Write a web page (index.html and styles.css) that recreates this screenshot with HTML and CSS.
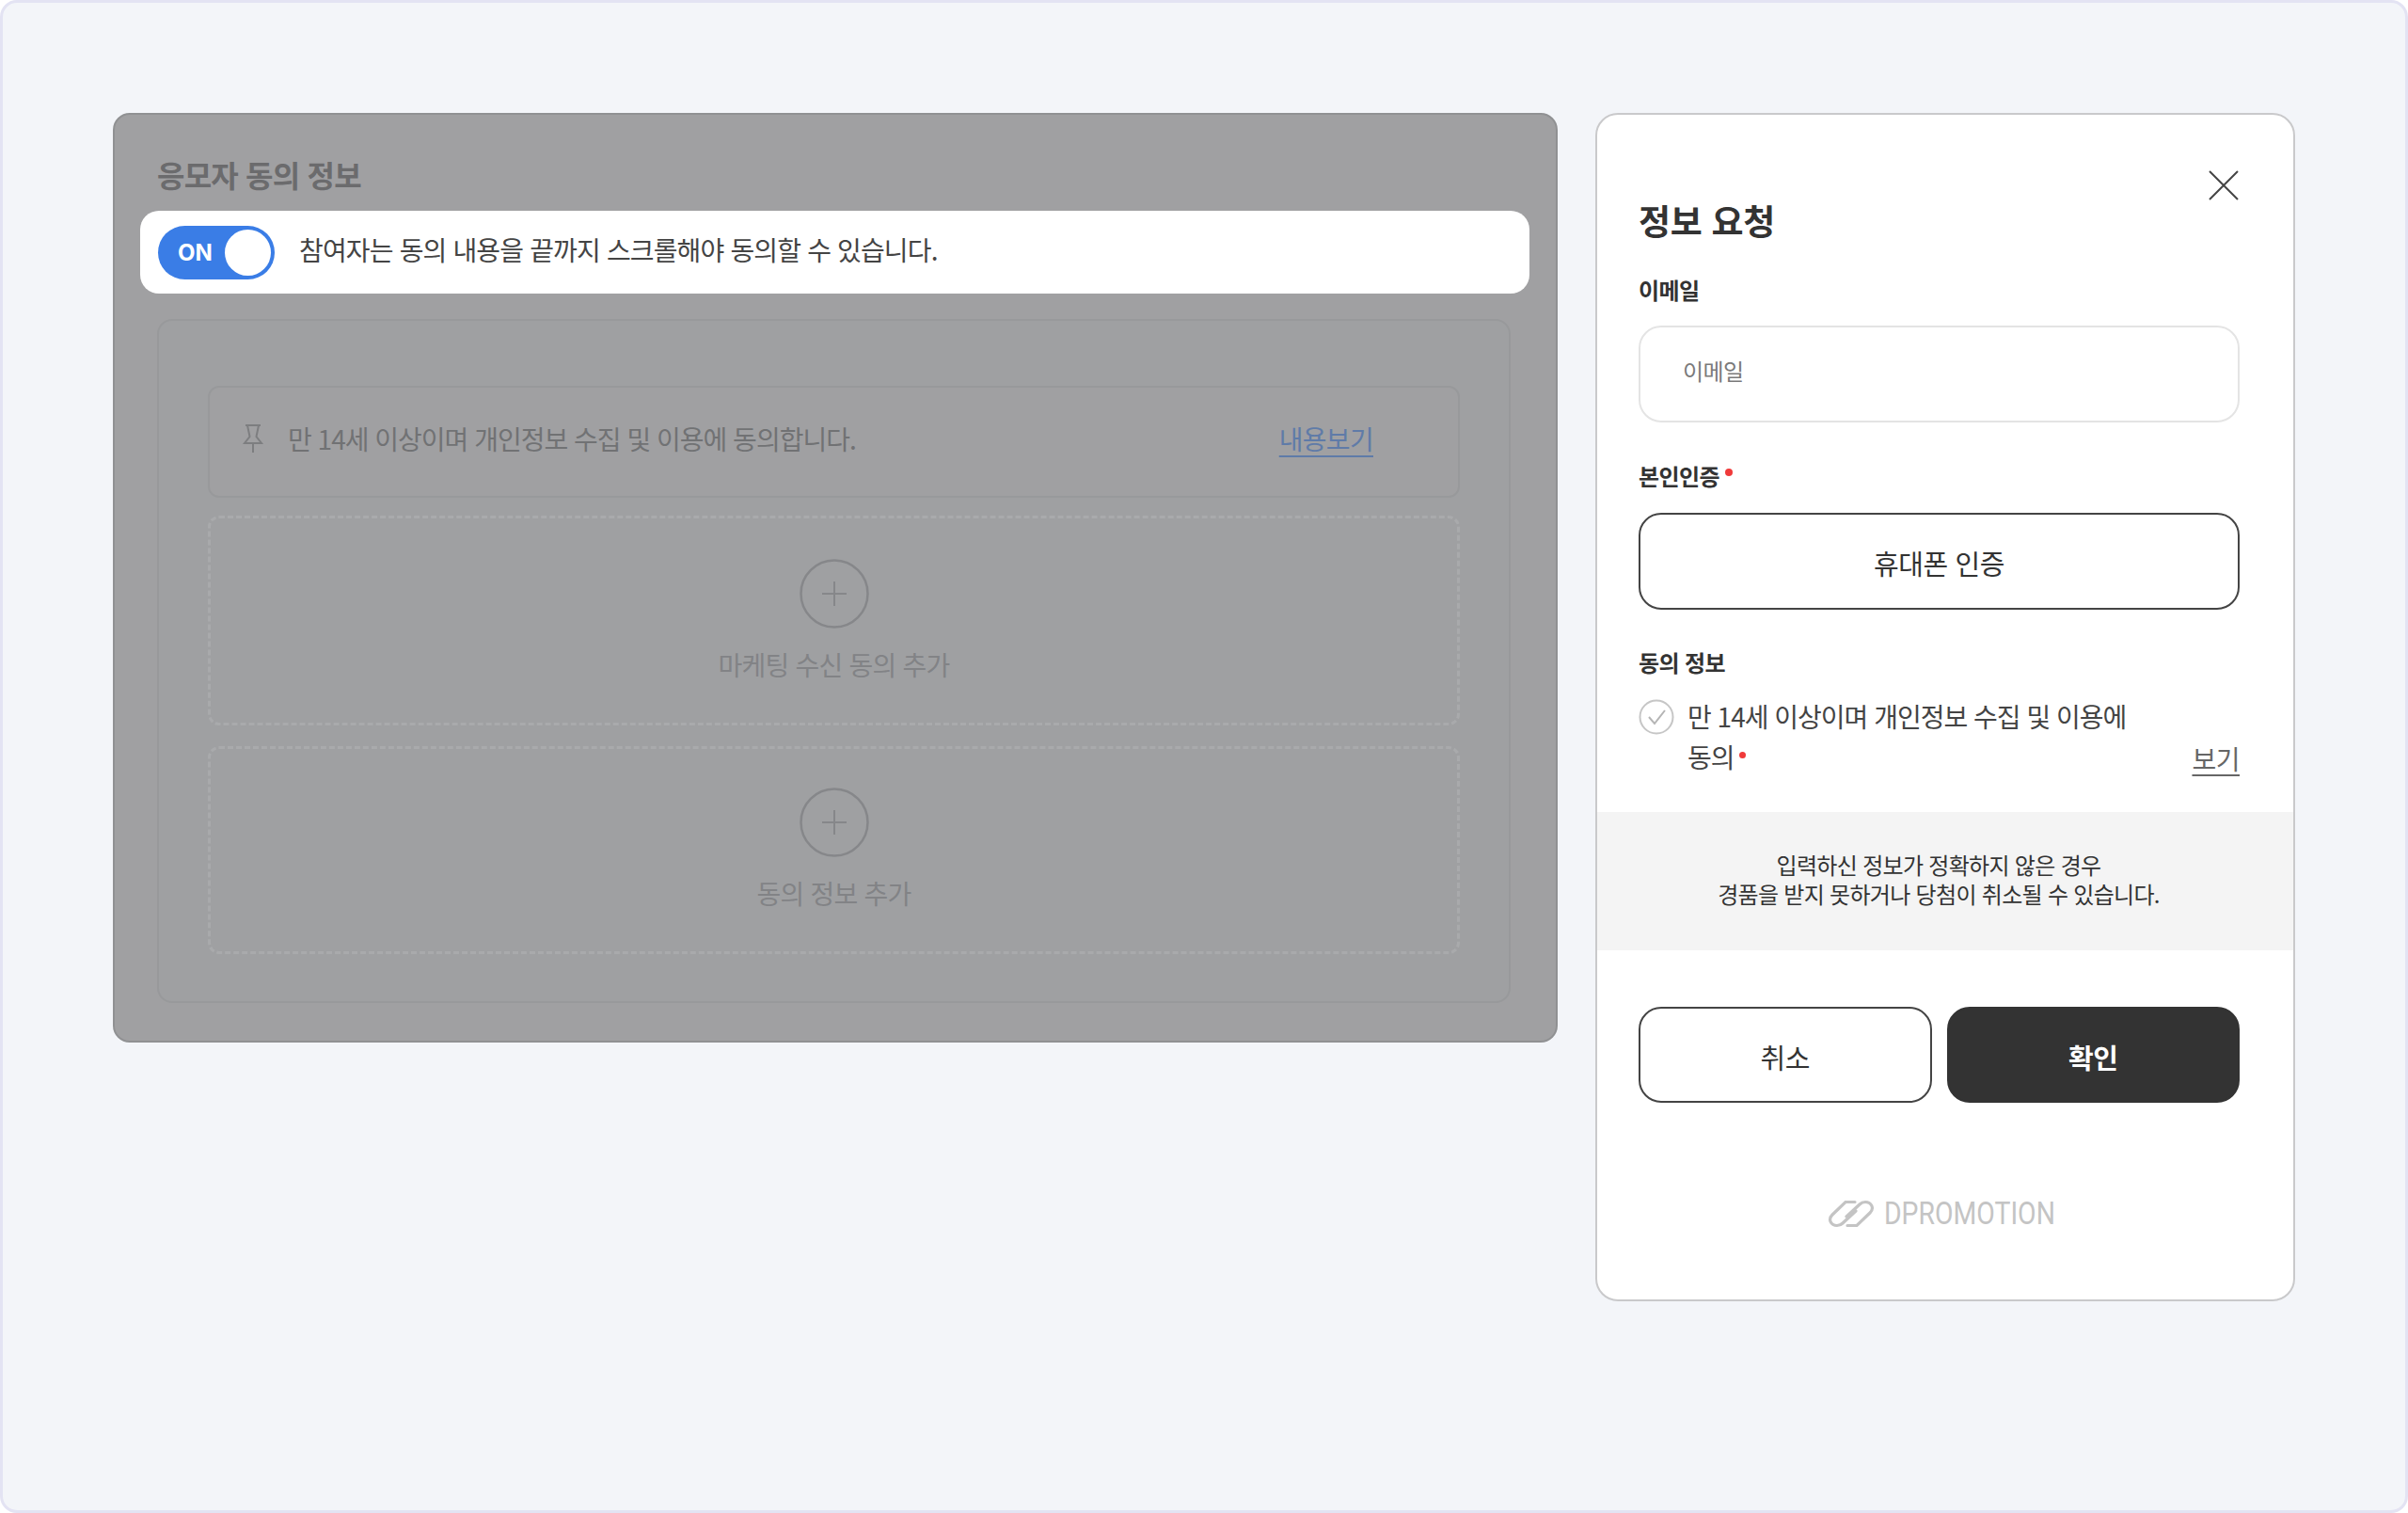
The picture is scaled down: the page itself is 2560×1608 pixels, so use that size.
FILE: index.html
```html
<!DOCTYPE html>
<html lang="ko">
<head>
<meta charset="utf-8">
<title>정보 요청</title>
<link rel="stylesheet" href="styles.css">
</head>
<body>
<main class="page">
  <section class="settings">
    <h2 class="settings-title">응모자 동의 정보</h2>
    <div class="notice-bar">
      <div class="toggle"><span class="toggle-label">ON</span><span class="toggle-knob"></span></div>
      <p class="notice-text">참여자는 동의 내용을 끝까지 스크롤해야 동의할 수 있습니다.</p>
    </div>
    <div class="consent-box">
      <div class="consent-row">
        <svg class="pin" viewBox="0 0 28 32" fill="none" stroke="#7d7e80" stroke-width="2"><path d="M6 2h16M8 2l2.5 12L5 21h18l-5.500-7L20 2M14 21v10"/></svg>
        <span class="consent-text">만 14세 이상이며 개인정보 수집 및 이용에 동의합니다.</span>
        <a class="consent-link">내용보기</a>
      </div>
      <div class="add-box">
        <svg class="add-icon" viewBox="0 0 74 74" fill="none" stroke="#86878a"><circle cx="37" cy="37" r="35.500" stroke-width="2.500"/><path d="M37 24v26M24 37h26" stroke-width="2"/></svg>
        <span class="add-label">마케팅 수신 동의 추가</span>
      </div>
      <div class="add-box add-box-short">
        <svg class="add-icon" viewBox="0 0 74 74" fill="none" stroke="#86878a"><circle cx="37" cy="37" r="35.500" stroke-width="2.500"/><path d="M37 24v26M24 37h26" stroke-width="2"/></svg>
        <span class="add-label">동의 정보 추가</span>
      </div>
    </div>
  </section>

  <section class="dialog">
    <div class="dialog-body">
      <div class="dialog-close">
        <svg class="close-icon" viewBox="0 0 34 34" fill="none" stroke="#444" stroke-width="2"><path d="M2 2l30 30M32 2L2 32"/></svg>
      </div>
      <h1 class="dialog-title">정보 요청</h1>
      <label class="field-label label-email">이메일</label>
      <div class="input"><span class="placeholder">이메일</span></div>
      <div class="field-label label-auth">본인인증<i class="req"></i></div>
      <button class="btn btn-wide">휴대폰 인증</button>
      <div class="field-label label-consent">동의 정보</div>
      <div class="agree">
        <svg class="check" viewBox="0 0 38 38" fill="none"><circle cx="19" cy="19" r="17.500" stroke="#c6c6c6" stroke-width="2"/><path d="M11 19l6 7 11-14" stroke="#b5b5b5" stroke-width="2"/></svg>
        <p class="agree-text">만 14세 이상이며 개인정보 수집 및 이용에<br>동의<i class="req req-small"></i></p>
        <a class="agree-link">보기</a>
      </div>
    </div>
    <div class="warning">입력하신 정보가 정확하지 않은 경우<br>경품을 받지 못하거나 당첨이 취소될 수 있습니다.</div>
    <div class="actions">
      <button class="btn btn-action">취소</button>
      <button class="btn btn-action btn-dark">확인</button>
    </div>
    <div class="brand">
      <svg class="brand-mark" viewBox="0 0 50 30" fill="none" stroke="#c4c4c4" stroke-width="3.200" stroke-linecap="round"><path d="M29 2.500H19L5 16c-5 5-1.500 11.500 5 11.500 2.500 0 4.500-1 6-2.500l14-13"/><path d="M21 27.500h10L45 14c5-5 1.500-11.500-5-11.500-2.500 0-4.500 1-6 2.500L20 18"/></svg>
      <span class="brand-name">DPROMOTION</span>
    </div>
  </section>
</main>
</body>
</html>
```

FILE: styles.css
```css
* { box-sizing: border-box; }
html, body { margin: 0; padding: 0; }
body {
  width: 2560px;
  height: 1608px;
  font-family: "Noto Sans CJK KR", "Noto Sans", sans-serif;
  color: #333;
}
p, h1, h2 { margin: 0; }
i { font-style: normal; }

.page {
  width: 2560px;
  height: 1608px;
  display: flex;
  align-items: flex-start;
  gap: 40px;
  padding: 117px 117px 0;
  background: #f3f5f9;
  border: 3px solid #e3e3f3;
  border-radius: 18px;
}

/* Left panel */
.settings {
  width: 1536px;
  height: 988px;
  flex: none;
  padding: 41px 28px 0 27px;
  background: #a0a0a2;
  border: 2px solid #909193;
  border-radius: 18px;
}
.settings-title {
  height: 44px;
  padding-left: 18px;
  font-size: 32px;
  line-height: 44px;
  font-weight: 700;
  letter-spacing: -0.8px;
  color: #6b6b6d;
}
.notice-bar {
  display: flex;
  align-items: center;
  gap: 26px;
  height: 88px;
  margin-top: 17px;
  padding: 0 20px 0 19px;
  background: #fff;
  border-radius: 20px;
}
.toggle {
  width: 124px;
  height: 57px;
  flex: none;
  display: flex;
  align-items: center;
  justify-content: space-between;
  padding: 0 4px 0 21px;
  background: #3a7de6;
  border-radius: 29px;
}
.toggle-label {
  font-family: "Inter", "Noto Sans", sans-serif;
  font-size: 24px;
  font-weight: 700;
  color: #fff;
}
.toggle-knob {
  width: 49px;
  height: 49px;
  background: #fff;
  border-radius: 50%;
}
.notice-text {
  margin-bottom: 6px;
  font-size: 28px;
  line-height: 40px;
  letter-spacing: -0.85px;
  color: #444;
}
.consent-box {
  display: flex;
  flex-direction: column;
  gap: 22px;
  width: 1439px;
  height: 727px;
  margin: 27px 0 0 18px;
  padding: 69px 52px 0;
  background: #9fa0a2;
  border: 2px solid #98999b;
  border-radius: 16px;
}
.consent-row {
  display: flex;
  flex: none;
  align-items: center;
  height: 119px;
  margin-bottom: -3px;
  padding: 0 90px 7px 32px;
  border: 2px solid #98999b;
  border-radius: 12px;
  background: #a0a0a2;
}
.pin { width: 28px; height: 32px; flex: none; margin-right: 23px; }
.consent-text {
  flex: 1;
  font-size: 28px;
  letter-spacing: -1px;
  color: #717274;
}
.consent-link {
  font-size: 28px;
  letter-spacing: -0.7px;
  color: #5f7ba8;
  text-decoration: underline;
  text-underline-offset: 6px;
}
.add-box {
  display: flex;
  flex: none;
  flex-direction: column;
  align-items: center;
  gap: 18px;
  height: 223px;
  padding-top: 43px;
  border: 3px dashed #a9aaac;
  border-radius: 12px;
}
.add-box-short { height: 221px; padding-top: 41px; }
.add-icon { width: 74px; height: 74px; flex: none; }
.add-label {
  font-size: 28px;
  line-height: 40px;
  letter-spacing: -0.8px;
  color: #828386;
}

/* Right dialog */
.dialog {
  width: 744px;
  height: 1263px;
  flex: none;
  background: #fff;
  border: 2px solid #c9c9cb;
  border-radius: 24px;
  overflow: hidden;
}
.dialog-body { padding: 58px 57px 0 44px; height: 741px; }
.dialog-close { display: flex; justify-content: flex-end; height: 34px; }
.close-icon { width: 34px; height: 34px; }
.dialog-title {
  margin-top: -5px;
  font-size: 37px;
  line-height: 50px;
  font-weight: 700;
  letter-spacing: -0.3px;
  color: #333;
}
.field-label {
  display: flex;
  align-items: flex-start;
  font-size: 24px;
  line-height: 34px;
  font-weight: 600;
  letter-spacing: -0.6px;
  color: #333;
}
.label-email { margin-top: 32px; }
.label-auth { margin-top: 40px; }
.label-consent { margin-top: 39px; }
.req {
  width: 8px;
  height: 8px;
  margin: 9px 0 0 6px;
  background: #f03a3a;
  border-radius: 50%;
  display: inline-block;
}
.req-small { width: 7px; height: 7px; margin: 0 0 12px 5px; vertical-align: middle; }
.input {
  display: flex;
  align-items: center;
  height: 103px;
  margin-top: 21px;
  padding: 0 45px 8px;
  border: 2px solid #e4e4e4;
  border-radius: 24px;
}
.placeholder { font-size: 24px; letter-spacing: -0.6px; color: #7a7a7a; }
.btn {
  height: 103px;
  padding: 3px 0 0;
  font-family: inherit;
  font-size: 29px;
  letter-spacing: -0.4px;
  color: #333;
  background: #fff;
  border: 2.500px solid #444;
  border-radius: 24px;
}
.btn-wide { display: block; width: 100%; margin-top: 22px; }
.btn-action { height: 102px; padding-top: 4px; }
.btn-dark { background: #333; border-color: #333; color: #fff; font-weight: 600; }
.agree { display: flex; align-items: flex-start; margin-top: 22px; }
.check { width: 38px; height: 38px; flex: none; margin: 0 14px 0 0; }
.agree-text {
  flex: 1;
  margin-top: -3px;
  font-size: 28px;
  line-height: 43px;
  letter-spacing: -1px;
  color: #444;
}
.agree-link {
  align-self: flex-end;
  font-size: 28px;
  line-height: 40px;
  letter-spacing: -0.5px;
  color: #666;
  text-decoration: underline;
  text-underline-offset: 5px;
}
.warning {
  height: 147px;
  padding: 40px 14px 0 0;
  font-size: 24px;
  line-height: 31px;
  letter-spacing: -0.7px;
  text-align: center;
  color: #333;
  background: #f4f4f4;
}
.actions {
  display: grid;
  grid-template-columns: 1fr 1fr;
  gap: 16px;
  margin: 60px 57px 0 44px;
}
.brand {
  display: flex;
  align-items: center;
  justify-content: center;
  gap: 10px;
  margin: 98px 0 0 -10px;
}
.brand-mark { width: 50px; height: 30px; flex: none; }
.brand-name {
  width: 181px;
  font-family: "Roboto", "Liberation Sans", sans-serif;
  font-size: 33px;
  line-height: 40px;
  white-space: nowrap;
  color: #c4c4c4;
  transform: scaleX(0.86);
  transform-origin: left center;
}
```
